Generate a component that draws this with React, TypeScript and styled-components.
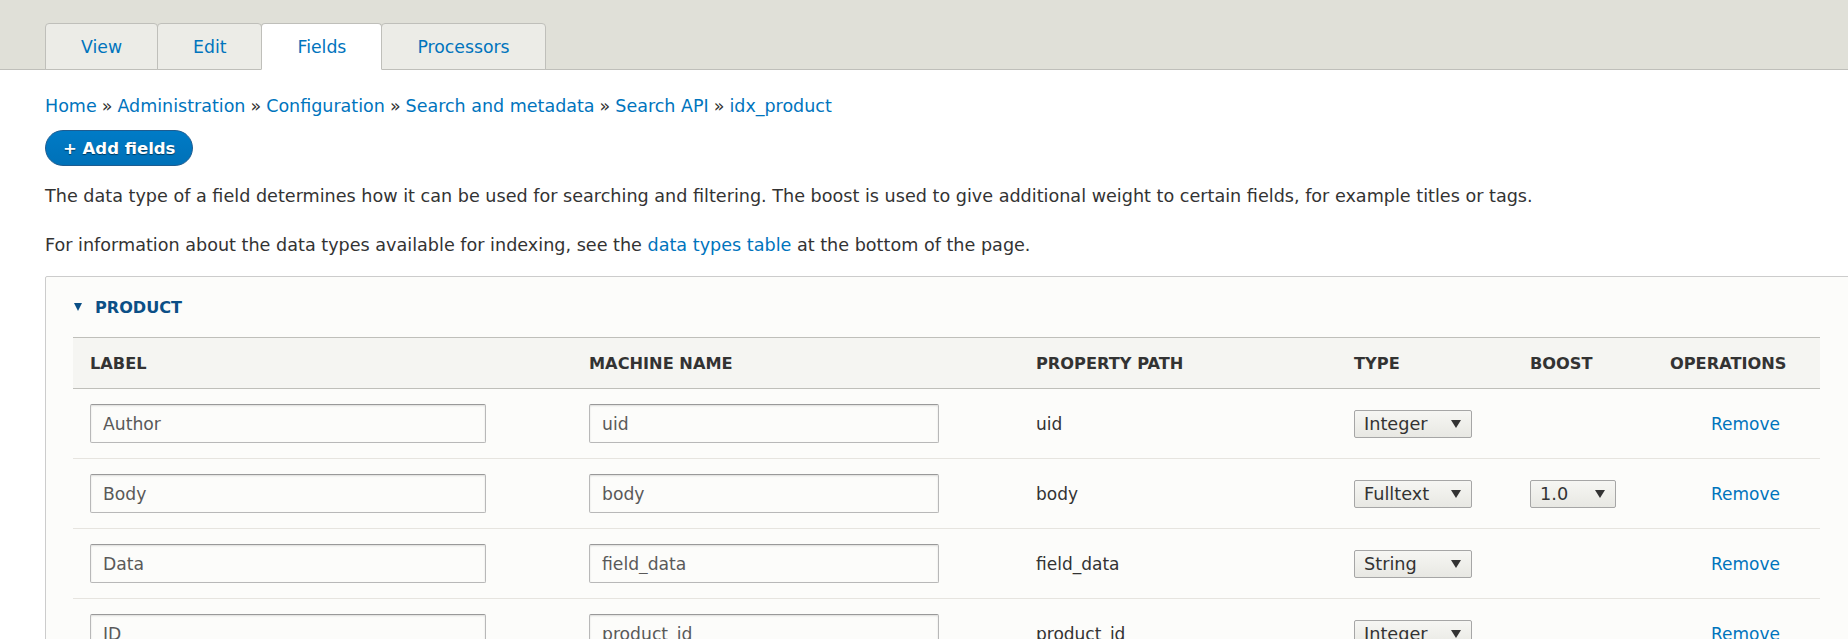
import React from "react"
import styled, { createGlobalStyle } from "styled-components"

const GlobalStyle = createGlobalStyle`
  html, body {
    margin: 0;
    padding: 0;
    background: #ffffff;
    overflow: hidden;
  }
  body {
    font-family: "DejaVu Sans", "Liberation Sans", sans-serif;
    font-size: 17.5px;
    color: #333333;
  }
`

const Header = styled.header`
  height: 69px;
  background: #e0e0d8;
  border-bottom: 1px solid #bfbfba;
  box-sizing: content-box;
  padding-left: 45px;
  display: flex;
  align-items: flex-end;
`

const Tabs = styled.nav`
  display: flex;
  margin-bottom: -1px;
`

const Tab = styled.a<{ active?: boolean }>`
  display: flex;
  align-items: center;
  height: 47px;
  box-sizing: border-box;
  padding: 0 35px;
  font-size: 17.3px;
  color: #0074bd;
  text-decoration: none;
  background: ${(p) => (p.active ? "#ffffff" : "#ececE7")};
  border: 1px solid #bfbfba;
  border-bottom: ${(p) => (p.active ? "1px solid #ffffff" : "1px solid #bfbfba")};
  border-radius: 4px 4px 0 0;
  margin-right: -1px;
  position: relative;
  z-index: ${(p) => (p.active ? 1 : 0)};
`

const Content = styled.main`
  padding: 26px 0 0 45px;
`

const Breadcrumb = styled.div`
  line-height: 20px;
  height: 20px;
  font-size: 17.5px;
  color: #333333;
`

const Crumb = styled.a`
  color: #0074bd;
  text-decoration: none;
`

const Sep = styled.span`
  margin: 0 5px;
`

const ActionButton = styled.button`
  display: block;
  margin-top: 14px;
  height: 36px;
  padding: 0 17px;
  border-radius: 20em;
  border: 1px solid #1e5c90;
  background: linear-gradient(to bottom, #007bc6, #0071b8);
  color: #ffffff;
  font-family: inherit;
  font-size: 16.5px;
  font-weight: bold;
  text-shadow: 0 1px 1px rgba(0, 0, 0, 0.5);
`

const Para = styled.p<{ gap: number }>`
  margin: ${(p) => p.gap}px 0 0;
  line-height: 20px;
  font-size: 17.6px;
  color: #333333;
`

const Link = styled.a`
  color: #0074bd;
  text-decoration: none;
`

const Fieldset = styled.section`
  margin-top: 21px;
  margin-right: -8px;
  background: #fcfcfa;
  border: 1px solid #cccccc;
  border-radius: 2px;
  padding: 20px 35px 0 27px;
  height: 420px;
`

const Legend = styled.div`
  display: flex;
  align-items: center;
  height: 20px;
  color: #0b4f86;
  font-weight: bold;
  font-size: 16.1px;
  text-transform: uppercase;
`

const Caret = styled.span`
  width: 0;
  height: 0;
  border-left: 4.5px solid transparent;
  border-right: 4.5px solid transparent;
  border-top: 8px solid #0b4f86;
  margin: 0 13px 0 1px;
`

const Table = styled.table`
  margin-top: 20px;
  width: 100%;
  border-collapse: collapse;
  table-layout: fixed;
`

const HeadCell = styled.th`
  height: 50px;
  padding: 0 0 0 17px;
  text-align: left;
  background: #f5f5f2;
  border-top: 1px solid #bfbfba;
  border-bottom: 1px solid #bfbfba;
  font-size: 16.2px;
  font-weight: bold;
  color: #333333;
  text-transform: uppercase;
`

const Row = styled.tr`
  border-bottom: 1px solid #e6e4df;
`

const Cell = styled.td<{ pad?: number }>`
  height: 69px;
  padding: 0 0 0 ${(p) => p.pad ?? 17}px;
  font-size: 17px;
  color: #333333;
  vertical-align: middle;
`

const TextInput = styled.input<{ w: number }>`
  display: block;
  width: ${(p) => p.w}px;
  height: 39px;
  box-sizing: border-box;
  padding: 0 12px;
  border: 1px solid #b8b8b8;
  border-top-color: #999999;
  border-radius: 2px;
  background: #fcfcfa;
  box-shadow: inset 0 1px 2px rgba(0, 0, 0, 0.125);
  font-family: inherit;
  font-size: 17.2px;
  color: #595959;
`

const Select = styled.div<{ w: number }>`
  display: flex;
  align-items: center;
  justify-content: space-between;
  width: ${(p) => p.w}px;
  height: 28px;
  box-sizing: border-box;
  padding: 0 10px 0 9px;
  border: 1px solid #a6a6a6;
  border-radius: 2px;
  background: linear-gradient(to bottom, #f6f6f3, #e8e8e3);
  font-size: 17.7px;
  color: #333333;
`

const Arrow = styled.span`
  width: 0;
  height: 0;
  border-left: 5px solid transparent;
  border-right: 5px solid transparent;
  border-top: 8px solid #333333;
`

const fields = [
  { label: "Author", machine: "uid", path: "uid", type: "Integer", boost: "" },
  { label: "Body", machine: "body", path: "body", type: "Fulltext", boost: "1.0" },
  { label: "Data", machine: "field_data", path: "field_data", type: "String", boost: "" },
  { label: "ID", machine: "product_id", path: "product_id", type: "Integer", boost: "" },
]

const tabs = ["View", "Edit", "Fields", "Processors"]
const crumbs = ["Home", "Administration", "Configuration", "Search and metadata", "Search API", "idx_product"]

const App = () => (
  <>
    <GlobalStyle />
    <Header>
      <Tabs>
        {tabs.map((t) => (
          <Tab key={t} active={t === "Fields"}>
            {t}
          </Tab>
        ))}
      </Tabs>
    </Header>
    <Content>
      <Breadcrumb>
        {crumbs.map((c, i) => (
          <React.Fragment key={c}>
            {i > 0 && <Sep>»</Sep>}
            <Crumb>{c}</Crumb>
          </React.Fragment>
        ))}
      </Breadcrumb>
      <ActionButton>+ Add fields</ActionButton>
      <Para gap={20}>
        The data type of a field determines how it can be used for searching and filtering. The boost is used to give
        additional weight to certain fields, for example titles or tags.
      </Para>
      <Para gap={29}>
        For information about the data types available for indexing, see the <Link>data types table</Link> at the bottom
        of the page.
      </Para>
      <Fieldset>
        <Legend>
          <Caret />
          Product
        </Legend>
        <Table>
          <colgroup>
            <col style={{ width: 499 }} />
            <col style={{ width: 447 }} />
            <col style={{ width: 318 }} />
            <col style={{ width: 176 }} />
            <col style={{ width: 140 }} />
            <col />
          </colgroup>
          <thead>
            <tr>
              <HeadCell>Label</HeadCell>
              <HeadCell>Machine name</HeadCell>
              <HeadCell>Property path</HeadCell>
              <HeadCell>Type</HeadCell>
              <HeadCell>Boost</HeadCell>
              <HeadCell>Operations</HeadCell>
            </tr>
          </thead>
          <tbody>
            {fields.map((f) => (
              <Row key={f.machine}>
                <Cell>
                  <TextInput w={396} defaultValue={f.label} />
                </Cell>
                <Cell>
                  <TextInput w={350} defaultValue={f.machine} />
                </Cell>
                <Cell>{f.path}</Cell>
                <Cell>
                  <Select w={118}>
                    {f.type}
                    <Arrow />
                  </Select>
                </Cell>
                <Cell>
                  {f.boost && (
                    <Select w={86}>
                      {f.boost}
                      <Arrow />
                    </Select>
                  )}
                </Cell>
                <Cell pad={58}>
                  <Link>Remove</Link>
                </Cell>
              </Row>
            ))}
          </tbody>
        </Table>
      </Fieldset>
    </Content>
  </>
)

export default App
